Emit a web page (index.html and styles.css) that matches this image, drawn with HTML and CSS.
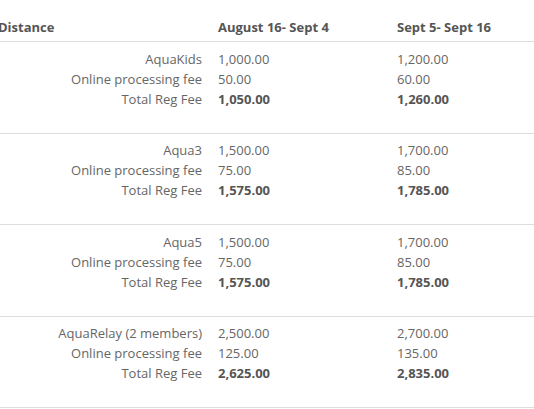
FILE: index.html
```html
<!DOCTYPE html>
<html>
<head>
<meta charset="utf-8">
<link rel="stylesheet" href="styles.css">
</head>
<body>
<table class="fees">
  <thead>
    <tr>
      <th class="col-label">Distance</th>
      <th class="col-a">August 16- Sept 4</th>
      <th class="col-b">Sept 5- Sept 16</th>
    </tr>
  </thead>
  <tbody>
    <tr>
      <td class="labels"><div>AquaKids</div><div>Online processing fee</div><div>Total Reg Fee</div></td>
      <td><div>1,000.00</div><div>50.00</div><div class="total">1,050.00</div></td>
      <td><div>1,200.00</div><div>60.00</div><div class="total">1,260.00</div></td>
    </tr>
    <tr>
      <td class="labels"><div>Aqua3</div><div>Online processing fee</div><div>Total Reg Fee</div></td>
      <td><div>1,500.00</div><div>75.00</div><div class="total">1,575.00</div></td>
      <td><div>1,700.00</div><div>85.00</div><div class="total">1,785.00</div></td>
    </tr>
    <tr>
      <td class="labels"><div>Aqua5</div><div>Online processing fee</div><div>Total Reg Fee</div></td>
      <td><div>1,500.00</div><div>75.00</div><div class="total">1,575.00</div></td>
      <td><div>1,700.00</div><div>85.00</div><div class="total">1,785.00</div></td>
    </tr>
    <tr>
      <td class="labels"><div>AquaRelay (2 members)</div><div>Online processing fee</div><div>Total Reg Fee</div></td>
      <td><div>2,500.00</div><div>125.00</div><div class="total">2,625.00</div></td>
      <td><div>2,700.00</div><div>135.00</div><div class="total">2,835.00</div></td>
    </tr>
  </tbody>
</table>
</body>
</html>
```
FILE: styles.css
```css
html, body {
  margin: 0;
  padding: 0;
  background: #fff;
  overflow: hidden;
}
body {
  font-family: "Open Sans", "Liberation Sans", sans-serif;
  font-size: 13px;
  line-height: 20px;
  color: #666;
}
.fees {
  border-collapse: collapse;
  margin-left: -10px;
  width: 554px;
  table-layout: fixed;
}
.fees th {
  text-align: left;
  font-weight: 700;
  color: #555;
  padding: 17px 8px 4px;
  border-bottom: 1px solid #ddd;
}
.fees .col-label { width: 204px; }
.fees .col-a { width: 163px; }
.fees td {
  vertical-align: top;
  padding: 6.5px 8px 24px;
  border-bottom: 1px solid #ddd;
}
.fees td.labels { text-align: right; }
.fees .total {
  font-weight: 700;
  color: #555;
}
```
